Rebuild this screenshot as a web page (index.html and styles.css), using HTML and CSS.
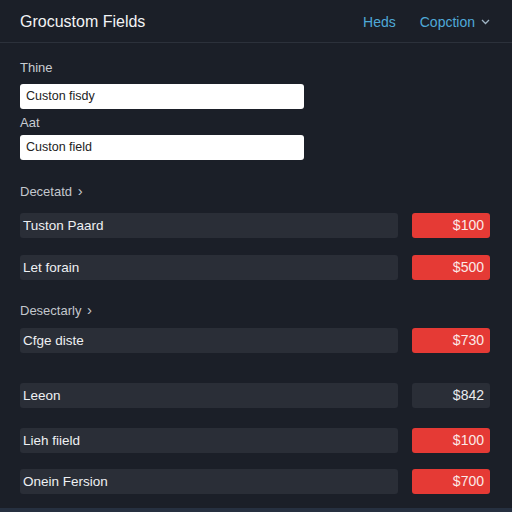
FILE: index.html
```html
<!DOCTYPE html>
<html lang="en">
<head>
    <meta charset="UTF-8">
    <meta name="viewport" content="width=device-width, initial-scale=1.0">
    <title>Grocustom Fields</title>
    <link rel="stylesheet" href="styles.css">
</head>
<body>
    <div class="header">
        <div class="title">Grocustom Fields</div>
        <div class="nav">
            <span class="nav-link">Heds</span>
            <span class="nav-link">Copction
                <svg class="chev" width="9" height="6" viewBox="0 0 9 6"><path d="M1 1l3.5 3.5L8 1" fill="none" stroke="currentColor" stroke-width="1.3"/></svg>
            </span>
        </div>
    </div>

    <div class="content">
        <div class="field">
            <div class="label">Thine</div>
            <div class="input">Custon fisdy</div>
        </div>
        <div class="field">
            <div class="label">Aat</div>
            <div class="input">Custon field</div>
        </div>

        <div class="section">Decetatd <span class="arrow">&#8250;</span></div>
        <div class="row">
            <div class="name">Tuston Paard</div>
            <div class="price red">$100</div>
        </div>
        <div class="row">
            <div class="name">Let forain</div>
            <div class="price red">$500</div>
        </div>

        <div class="section second">Desectarly <span class="arrow">&#8250;</span></div>
        <div class="row">
            <div class="name">Cfge diste</div>
            <div class="price red">$730</div>
        </div>
        <div class="row spaced">
            <div class="name">Leeon</div>
            <div class="price">$842</div>
        </div>
        <div class="row mid">
            <div class="name">Lieh fiield</div>
            <div class="price red">$100</div>
        </div>
        <div class="row">
            <div class="name">Onein Fersion</div>
            <div class="price red">$700</div>
        </div>
    </div>
    <div class="footer"></div>
</body>
</html>
```

FILE: styles.css
```css
body {
    margin: 0;
    background-color: #1b1f28;
    font-family: "Liberation Sans", Arial, sans-serif;
    width: 512px;
    height: 512px;
    overflow: hidden;
    position: relative;
}
.header {
    display: flex;
    justify-content: space-between;
    align-items: center;
    height: 43px;
    padding: 0 22px 0 20px;
    border-bottom: 1px solid #2c313b;
    box-sizing: border-box;
}
.title {
    color: #f2f3f5;
    font-size: 16px;
    padding-top: 1px;
}
.nav {
    display: flex;
    gap: 24px;
    padding-top: 1px;
}
.nav-link {
    color: #4fa9d8;
    font-size: 14px;
    display: flex;
    align-items: center;
    gap: 6px;
}
.chev {
    color: #9fb4c4;
}
.content {
    padding: 17px 208px 0 20px;
    position: relative;
}
.field {
    margin-bottom: 6px;
}
.label {
    color: #c9cdd3;
    font-size: 13px;
    height: 16px;
    margin-bottom: 8px;
}
.field + .field .label {
    margin-bottom: 4px;
}
.input {
    background-color: #ffffff;
    border-radius: 3px;
    height: 25px;
    line-height: 25px;
    padding: 0 6px;
    color: #222;
    font-size: 12.5px;
    box-sizing: border-box;
}
.section {
    color: #c3c7cd;
    font-size: 13px;
    margin-top: 22px;
    height: 16px;
    margin-bottom: 15px;
}
.section.second {
    margin-top: 21px;
    margin-bottom: 11px;
}
.arrow {
    font-size: 15px;
    margin-left: 2px;
}
.row {
    display: flex;
    justify-content: space-between;
    width: 470px;
    margin-bottom: 17px;
}
.row.spaced {
    margin-top: 30px;
    margin-bottom: 20px;
}
.row.mid {
    margin-bottom: 16px;
}
.name {
    background-color: #2a2e37;
    width: 378px;
    height: 25px;
    line-height: 25px;
    border-radius: 3px;
    color: #eef0f3;
    font-size: 13.5px;
    padding: 0 3px;
    box-sizing: border-box;
}
.price {
    background-color: #2a2e37;
    width: 78px;
    height: 25px;
    line-height: 25px;
    border-radius: 3px;
    color: #e9ebee;
    font-size: 14px;
    text-align: right;
    padding-right: 6px;
    box-sizing: border-box;
}
.price.red {
    background-color: #e53a35;
    color: #fbe9e8;
}
.footer {
    position: absolute;
    left: 0;
    right: 0;
    bottom: 0;
    height: 4px;
    background-color: #263040;
}
```
